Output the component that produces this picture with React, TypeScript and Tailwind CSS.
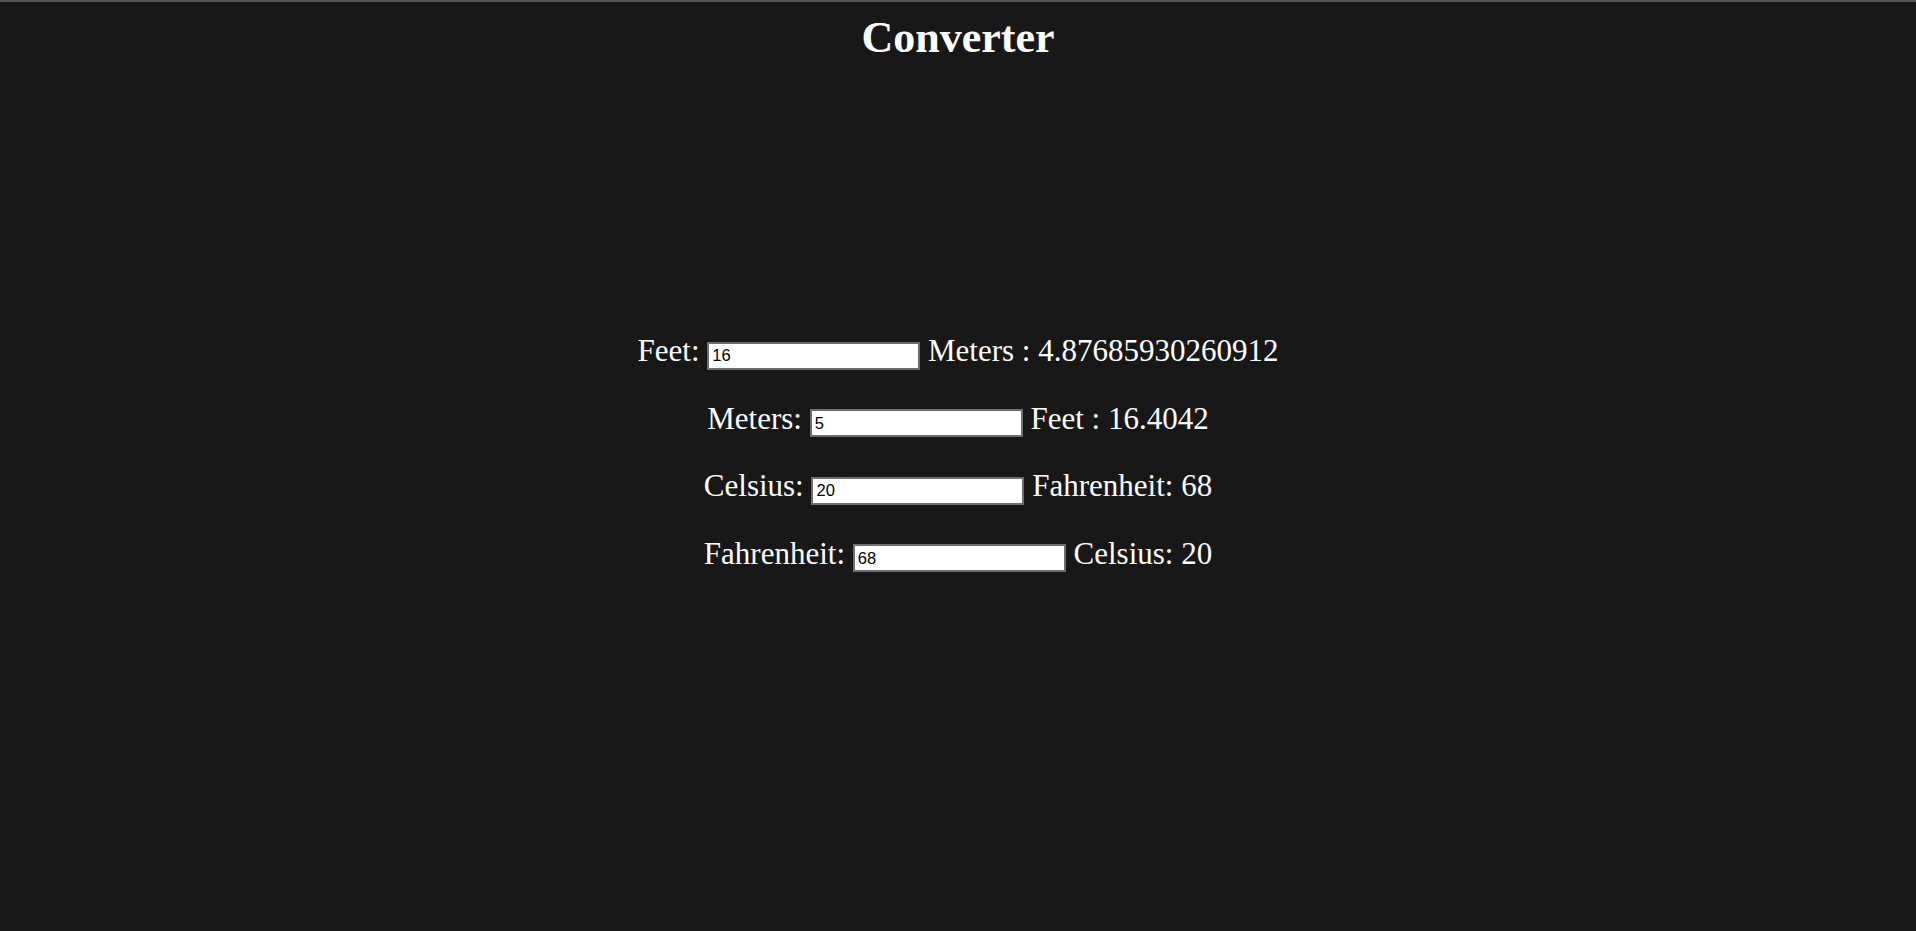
import { useState } from 'react';

export default function App() {
  const [feet, setFeet] = useState('16');
  const [meters, setMeters] = useState('5');
  const [celsius, setCelsius] = useState('20');
  const [fahrenheit, setFahrenheit] = useState('68');

  const inputCls =
    "w-[213px] h-[28px] border-2 border-[#6e6e6e] bg-white text-black px-[3px] text-[16.5px] font-['Liberation_Sans',Arial,sans-serif] outline-none";

  const toMeters = (parseFloat(feet) || 0) / 3.2808;
  const toFeet = (parseFloat(meters) || 0) * 3.28084;
  const toF = (parseFloat(celsius) || 0) * 1.8 + 32;
  const toC = ((parseFloat(fahrenheit) || 0) - 32) / 1.8;

  return (
    <div className="min-h-screen bg-[#181818] border-t-2 border-[#555555] text-white font-['Liberation_Serif','Times_New_Roman',serif]">
      <h1 className="mt-[10px] text-center text-[44px] font-bold leading-[normal]">Converter</h1>

      <div className="mt-[270px] flex flex-col gap-[31px] text-center text-[31px] leading-[35px]">
        <p>
          Feet: <input className={inputCls} value={feet} onChange={e => setFeet(e.target.value)} /> Meters : {parseFloat(toMeters.toPrecision(15))}
        </p>
        <p>
          Meters: <input className={inputCls} value={meters} onChange={e => setMeters(e.target.value)} /> Feet : {parseFloat(toFeet.toFixed(4))}
        </p>
        <p>
          Celsius: <input className={inputCls} value={celsius} onChange={e => setCelsius(e.target.value)} /> Fahrenheit: {Math.round(toF * 1000) / 1000}
        </p>
        <p>
          Fahrenheit: <input className={inputCls} value={fahrenheit} onChange={e => setFahrenheit(e.target.value)} /> Celsius: {Math.round(toC * 1000) / 1000}
        </p>
      </div>
    </div>
  );
}
